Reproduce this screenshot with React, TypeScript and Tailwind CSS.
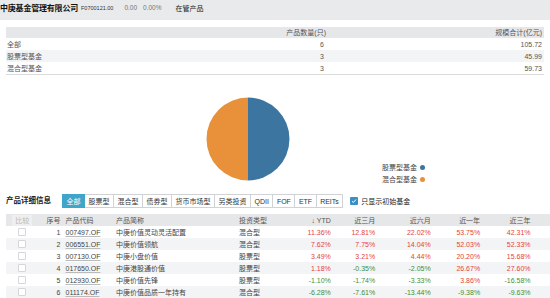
import React from 'react';

const summary = [
  { name: '全部', count: 6, scale: '105.72' },
  { name: '股票型基金', count: 3, scale: '45.99' },
  { name: '混合型基金', count: 3, scale: '59.73' },
];

const tabs = ['全部', '股票型', '混合型', '债券型', '货币市场型', '另类投资', 'QDII', 'FOF', 'ETF', 'REITs'];

const funds = [
  { no: 1, code: '007497.OF', name: '中庚价值灵动灵活配置', type: '混合型', v: ['11.36%', '12.81%', '22.02%', '53.75%', '42.31%'] },
  { no: 2, code: '006551.OF', name: '中庚价值领航', type: '混合型', v: ['7.62%', '7.75%', '14.04%', '52.03%', '52.33%'] },
  { no: 3, code: '007130.OF', name: '中庚小盘价值', type: '股票型', v: ['3.49%', '3.21%', '4.44%', '20.20%', '15.68%'] },
  { no: 4, code: '017650.OF', name: '中庚港股通价值', type: '股票型', v: ['1.18%', '-0.35%', '-2.05%', '26.67%', '27.60%'] },
  { no: 5, code: '012930.OF', name: '中庚价值先锋', type: '股票型', v: ['-1.10%', '-1.74%', '-3.33%', '3.86%', '-16.58%'] },
  { no: 6, code: '011174.OF', name: '中庚价值品质一年持有', type: '混合型', v: ['-6.28%', '-7.61%', '-13.44%', '-9.38%', '-9.63%'] },
];

const perfCols = [
  { label: '↓ YTD', w: 'w-[41px]' },
  { label: '近三月', w: 'w-[44px]' },
  { label: '近六月', w: 'w-[55px]' },
  { label: '近一年', w: 'w-[49px]' },
  { label: '近三年', w: 'w-[50px]' },
];

function Box() {
  return <span className="inline-block w-[8px] h-[8px] bg-white border border-[#d4d6d9] rounded-[1px] align-middle" />;
}

export default function App() {
  return (
    <div className="w-[550px] h-[298px] overflow-hidden bg-white text-[#333] font-['Liberation_Sans','Noto_Sans_CJK_SC',sans-serif] text-[7px] leading-none">
      {/* title bar */}
      <div className="h-[20px] bg-[#e9eaeb] flex items-center gap-[3px] pb-[3px]">
        <span className="text-[8px] font-bold text-[#111] tracking-[-0.2px]">中庚基金管理有限公司</span>
        <span className="text-[5.5px] text-[#333]">F0700121.00</span>
        <span className="ml-[8px] text-[6.5px] text-[#777]">0.00</span>
        <span className="ml-[3px] text-[6.5px] text-[#777]">0.00%</span>
        <span className="ml-[11px] text-[7px] text-[#222]">在管产品</span>
      </div>

      {/* summary */}
      <div className="mt-[7px] mx-[6px] border-b border-[#dcdcdc]">
        <div className="h-[11px] bg-[#e6e7e9] flex items-center text-[#555]">
          <span className="flex-1" />
          <span className="w-[100px] text-right pr-[2px]">产品数量(只)</span>
          <span className="w-[216px] text-right pr-[2px]">规模合计(亿元)</span>
        </div>
        {summary.map((r, i) => (
          <div key={r.name} className={`h-[12px] flex items-center text-[#555] ${i === 1 ? 'bg-[#f3f4f5]' : 'bg-white'}`}>
            <span className="flex-1 pl-[1px]">{r.name}</span>
            <span className="w-[100px] text-right pr-[4px]">{r.count}</span>
            <span className="w-[216px] text-right pr-[2px]">{r.scale}</span>
          </div>
        ))}
      </div>

      {/* chart */}
      <div className="h-[115px] flex">
        <svg className="mt-[22px] ml-[206px]" width="84" height="84" viewBox="0 0 84 84">
          <path d="M42 0.5 A41.5 41.5 0 0 1 42 83.5 Z" fill="#3c75a0" />
          <path d="M42 0.5 A41.5 41.5 0 0 0 42 83.5 Z" fill="#e8903a" />
        </svg>
        <div className="ml-[92px] mt-[89px] flex flex-col gap-[5px] text-[7px] text-[#444]">
          <div className="flex items-center gap-[3px]">
            <span>股票型基金</span>
            <span className="w-[5px] h-[5px] rounded-full bg-[#3c75a0]" />
          </div>
          <div className="flex items-center gap-[3px]">
            <span>混合型基金</span>
            <span className="w-[5px] h-[5px] rounded-full bg-[#e8903a]" />
          </div>
        </div>
      </div>

      {/* tabs */}
      <div className="flex items-center mt-[4px] pl-[6px]">
        <span className="text-[7.5px] font-bold text-[#222] w-[56px]">产品详细信息</span>
        <div className="flex h-[14px]">
          {tabs.map((t, i) => (
            <span
              key={t}
              className={`flex items-center px-[3.5px] border border-l-0 first:border-l ${i === 0 ? 'bg-[#3fa5c9] text-white border-[#3fa5c9]' : 'bg-white text-[#333] border-[#d0d2d5]'}`}
            >
              {t}
            </span>
          ))}
        </div>
        <span className="ml-[7px] w-[8px] h-[8px] rounded-[1px] bg-[#3b8fc4] flex items-center justify-center">
          <svg width="6" height="6" viewBox="0 0 6 6">
            <path d="M1 3.2 L2.4 4.5 L5 1.5" stroke="white" strokeWidth="1" fill="none" />
          </svg>
        </span>
        <span className="ml-[3px] text-[#222]">只显示初始基金</span>
      </div>

      {/* table */}
      <div className="mt-[6px] ml-[6px] overflow-hidden">
        <table className="border-collapse table-fixed w-[570px]">
          <thead>
            <tr className="h-[12px] bg-[#e6e7e9] text-[#555]">
              <th className="w-[32px] font-normal">
                <span className="inline-block px-[3px] py-[2px] bg-[#efeff0] text-[#bbb]">比较</span>
              </th>
              <th className="w-[24px] font-normal text-right pr-[2px]">序号</th>
              <th className="w-[50px] font-normal text-left pl-[3px]">产品代码</th>
              <th className="w-[122px] font-normal text-left pl-[3px]">产品简称</th>
              <th className="w-[56px] font-normal text-left pl-[3px]">投资类型</th>
              {perfCols.map((c) => (
                <th key={c.label} className={`${c.w} font-normal text-right pr-[3px]`}>{c.label}</th>
              ))}
              <th className="w-[42px]" />
            </tr>
          </thead>
          <tbody>
            {funds.map((f, i) => (
              <tr key={f.code} className={`h-[12px] ${i % 2 === 1 ? 'bg-[#f3f4f5]' : 'bg-white'} text-[#444]`}>
                <td className="text-center"><Box /></td>
                <td className="text-right pr-[2px]">{f.no}</td>
                <td className="pl-[3px]">
                  <span className="underline decoration-[#bbb] underline-offset-[1px]">{f.code}</span>
                </td>
                <td className="pl-[3px]">{f.name}</td>
                <td className="pl-[3px]">{f.type}</td>
                {f.v.map((x, j) => (
                  <td key={j} className={`text-right pr-[3px] ${x.startsWith('-') ? 'text-[#3f8f3a]' : 'text-[#e8423c]'}`}>{x}</td>
                ))}
                <td />
              </tr>
            ))}
          </tbody>
        </table>
      </div>
    </div>
  );
}
